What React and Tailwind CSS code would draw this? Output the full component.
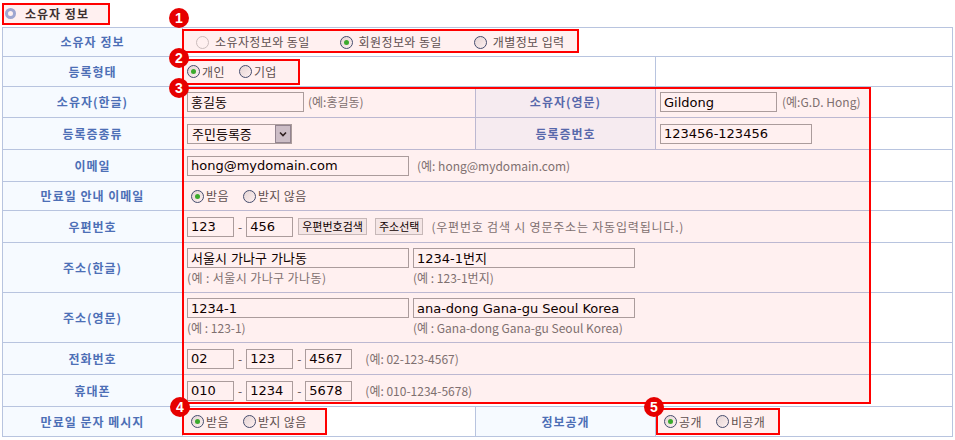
import React from 'react';

const font = { fontFamily: '"Noto Sans CJK KR", "Noto Sans", sans-serif' };
const latin = { fontFamily: '"DejaVu Sans", "Noto Sans CJK KR", sans-serif' };

const Radio = ({ checked, disabled }) => (
  <span
    className={`inline-flex items-center justify-center w-[13px] h-[13px] rounded-full border ${
      disabled ? 'border-[#c9c9c9] bg-white' : 'border-[#3a5275] bg-gradient-to-br from-[#e2e2e2] to-white'
    }`}
  >
    {checked && <span className="w-[5px] h-[5px] rounded-full bg-[#2fb52f]" />}
  </span>
);

const RadioItem = ({ checked, disabled, label, className = '' }) => (
  <span className={`inline-flex items-center gap-[2px] ${className}`}>
    <Radio checked={checked} disabled={disabled} />
    <span className="text-[12px] text-[#555] tracking-[0.4px]">{label}</span>
  </span>
);

const Input = ({ value, w }) => (
  <span
    className={`inline-flex items-center h-[20px] ${w} border border-[#a6a6a6] bg-white px-[3px] text-[13px] text-black leading-none whitespace-nowrap overflow-hidden`}
    style={latin}
  >
    {value}
  </span>
);

const Hint = ({ children, className = '' }) => (
  <span className={`text-[12px] text-[#777] whitespace-nowrap ${className}`}>{children}</span>
);

const Label = ({ children }) => (
  <div className="flex items-center justify-center bg-[#f6faff] border-r border-[#b8c4df] text-[12px] font-bold text-[#4d6fb6] tracking-[1px]">
    {children}
  </div>
);

const Row = ({ h, children }) => (
  <div className={`grid grid-cols-[180px_293px_180px_1fr] border-b border-[#b8c4df] ${h}`}>{children}</div>
);

const Value = ({ span = 'col-span-3', children, className = '' }) => (
  <div className={`${span} flex items-center px-[4px] border-r border-[#b8c4df] ${className}`}>{children}</div>
);

const Dash = () => <span className="text-[12px] text-[#555] mx-[4px]">-</span>;

const SmallBtn = ({ children, className = '' }) => (
  <span
    className={`inline-flex items-center h-[17px] px-[3px] bg-[#f4f4f4] border border-[#c4c4c4] text-[11px] text-black leading-none ${className}`}
  >
    {children}
  </span>
);

const Badge = ({ n, className }) => (
  <span
    className={`absolute w-[20px] h-[20px] rounded-full bg-[#e60000] text-white text-[14px] font-bold flex items-center justify-center leading-none ${className}`}
    style={{ fontFamily: '"Liberation Sans", Arial, sans-serif' }}
  >
    {n}
  </span>
);

const Box = ({ className }) => (
  <div className={`absolute border-2 border-[#ff0000] bg-[rgba(255,0,0,0.06)] pointer-events-none ${className}`} />
);

export default function App() {
  return (
    <div className="relative w-[955px] h-[440px] bg-white overflow-hidden" style={font}>
      <div className="h-[27px] flex items-center pl-[5px] gap-[9px]">
        <span className="w-[11px] h-[11px] rounded-full border-[3px] border-[#98b0dd] bg-white" />
        <span className="text-[12px] font-bold text-[#333] tracking-[1px]">소유자 정보</span>
      </div>

      <div className="ml-[2px] w-[951px] border-l border-t border-[#b8c4df]">
        <Row h="h-[29px]">
          <Label>소유자 정보</Label>
          <Value className="pl-[13px]">
            <RadioItem disabled label="소유자정보와 동일" className="gap-[6px]" />
            <RadioItem checked label="회원정보와 동일" className="ml-[30px] gap-[6px]" />
            <RadioItem label="개별정보 입력" className="ml-[32px] gap-[6px]" />
          </Value>
        </Row>
        <Row h="h-[30px]">
          <Label>등록형태</Label>
          <Value span="col-span-2">
            <RadioItem checked label="개인" />
            <RadioItem label="기업" className="ml-[14px]" />
          </Value>
          <div className="border-r border-[#b8c4df]" />
        </Row>
        <Row h="h-[31px]">
          <Label>소유자(한글)</Label>
          <Value span="col-span-1">
            <Input value="홍길동" w="w-[117px]" />
            <Hint className="ml-[4px]">(예:홍길동)</Hint>
          </Value>
          <Label>소유자(영문)</Label>
          <Value span="col-span-1">
            <Input value="Gildong" w="w-[117px]" />
            <Hint className="ml-[5px]">(예:G.D. Hong)</Hint>
          </Value>
        </Row>
        <Row h="h-[32px]">
          <Label>등록증종류</Label>
          <Value span="col-span-1">
            <span className="inline-flex items-center h-[20px] w-[105px] border border-[#a6a6a6] bg-white pl-[4px] text-[13px] text-black justify-between">
              주민등록증
              <span className="w-[16px] h-[18px] bg-[#c9c9d3] border border-[#8d8d9a] flex items-center justify-center">
                <svg width="8" height="6" viewBox="0 0 8 6">
                  <path d="M1 1.5 L4 4.5 L7 1.5" fill="none" stroke="#222" strokeWidth="1.6" />
                </svg>
              </span>
            </span>
          </Value>
          <Label>등록증번호</Label>
          <Value span="col-span-1">
            <Input value="123456-123456" w="w-[152px]" />
          </Value>
        </Row>
        <Row h="h-[32px]">
          <Label>이메일</Label>
          <Value>
            <Input value="hong@mydomain.com" w="w-[222px]" />
            <Hint className="ml-[8px]">(예: hong@mydomain.com)</Hint>
          </Value>
        </Row>
        <Row h="h-[29px]">
          <Label>만료일 안내 이메일</Label>
          <Value className="pl-[8px]">
            <RadioItem checked label="받음" />
            <RadioItem label="받지 않음" className="ml-[14px]" />
          </Value>
        </Row>
        <Row h="h-[32px]">
          <Label>우편번호</Label>
          <Value>
            <Input value="123" w="w-[47px]" />
            <Dash />
            <Input value="456" w="w-[47px]" />
            <SmallBtn className="ml-[5px]">우편번호검색</SmallBtn>
            <SmallBtn className="ml-[8px]">주소선택</SmallBtn>
            <Hint className="ml-[8px] tracking-[0.8px]">(우편번호 검색 시 영문주소는 자동입력됩니다.)</Hint>
          </Value>
        </Row>
        <Row h="h-[50px]">
          <Label>주소(한글)</Label>
          <Value className="items-start pt-[5px] gap-[4px]">
            <div className="flex flex-col">
              <Input value="서울시 가나구 가나동" w="w-[222px]" />
              <Hint className="mt-[1px] tracking-[0.4px]">(예 : 서울시 가나구 가나동)</Hint>
            </div>
            <div className="flex flex-col">
              <Input value="1234-1번지" w="w-[222px]" />
              <Hint className="mt-[1px]">(예 : 123-1번지)</Hint>
            </div>
          </Value>
        </Row>
        <Row h="h-[50px]">
          <Label>주소(영문)</Label>
          <Value className="items-start pt-[5px] gap-[4px]">
            <div className="flex flex-col">
              <Input value="1234-1" w="w-[222px]" />
              <Hint className="mt-[1px]">(예 : 123-1)</Hint>
            </div>
            <div className="flex flex-col">
              <Input value="ana-dong Gana-gu Seoul Korea" w="w-[222px]" />
              <Hint className="mt-[1px]">(예 : Gana-dong Gana-gu Seoul Korea)</Hint>
            </div>
          </Value>
        </Row>
        <Row h="h-[32px]">
          <Label>전화번호</Label>
          <Value>
            <Input value="02" w="w-[47px]" />
            <Dash />
            <Input value="123" w="w-[47px]" />
            <Dash />
            <Input value="4567" w="w-[47px]" />
            <Hint className="ml-[13px]">(예: 02-123-4567)</Hint>
          </Value>
        </Row>
        <Row h="h-[32px]">
          <Label>휴대폰</Label>
          <Value>
            <Input value="010" w="w-[47px]" />
            <Dash />
            <Input value="1234" w="w-[47px]" />
            <Dash />
            <Input value="5678" w="w-[47px]" />
            <Hint className="ml-[13px]">(예: 010-1234-5678)</Hint>
          </Value>
        </Row>
        <Row h="h-[30px]">
          <Label>만료일 문자 메시지</Label>
          <Value span="col-span-1" className="pl-[8px]">
            <RadioItem checked label="받음" />
            <RadioItem label="받지 않음" className="ml-[14px]" />
          </Value>
          <Label>정보공개</Label>
          <Value span="col-span-1" className="pl-[8px]">
            <RadioItem checked label="공개" />
            <RadioItem label="비공개" className="ml-[14px]" />
          </Value>
        </Row>
      </div>

      <Box className="left-[2px] top-[3px] w-[108px] h-[22px]" />
      <Box className="left-[182px] top-[29px] w-[397px] h-[24px]" />
      <Box className="left-[182px] top-[59px] w-[118px] h-[26px]" />
      <Box className="left-[182px] top-[87px] w-[689px] h-[317px]" />
      <Box className="left-[182px] top-[408px] w-[145px] h-[27px]" />
      <Box className="left-[656px] top-[408px] w-[124px] h-[27px]" />

      <Badge n="1" className="left-[169px] top-[8px]" />
      <Badge n="2" className="left-[169px] top-[48px]" />
      <Badge n="3" className="left-[169px] top-[78px]" />
      <Badge n="4" className="left-[170px] top-[397px]" />
      <Badge n="5" className="left-[644px] top-[397px]" />
    </div>
  );
}
